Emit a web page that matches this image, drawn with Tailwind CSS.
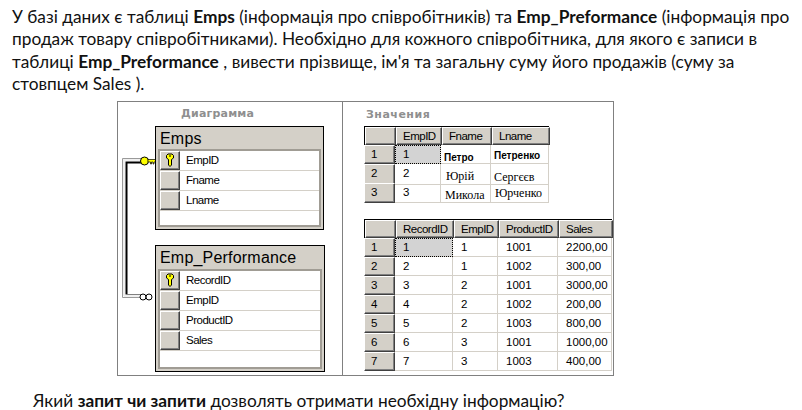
<!DOCTYPE html>
<html lang="uk">
<head>
<meta charset="UTF-8">
<title>Emps</title>
<script src="https://cdn.jsdelivr.net/npm/@tailwindcss/browser@4"></script>
</head>
<body class="bg-white w-[802px] h-[410px] overflow-hidden font-['Lato','Open_Sans',sans-serif] text-[#111]">
  <p class="pl-3 pt-[6px] text-[17.3px] leading-[22.4px] whitespace-nowrap">
    У базі даних є таблиці <b>Emps</b> (інформація про співробітників) та <b>Emp_Preformance</b> (інформація про<br>
    продаж товару співробітниками). Необхідно для кожного співробітника, для якого є записи в<br>
    таблиці <b>Emp_Preformance</b> , вивести прізвище, ім'я та загальну суму його продажів (суму за<br>
    стовпцем Sales ).
  </p>

  <div class="ml-[117px] mt-[5px] w-[497px] h-[275px] border border-[#808080] flex font-['Liberation_Sans',sans-serif] text-black">
    <!-- diagram -->
    <div class="relative w-[225px] border-r border-[#808080]">
      <div class="pt-[5px] pl-[63px] text-[11px] leading-[14px] font-bold tracking-[0.2px] text-[#8f8f8f] font-['DejaVu_Sans',sans-serif]">Диаграмма</div>

      <svg class="absolute left-[4px] top-[56px]" width="34" height="140" viewBox="0 0 34 140" fill="none">
        <path d="M.5 139.5V.5H20M.5 139.5H20" stroke="#9a9a9a"/>
        <path d="M2 138V2H20M2 138H20" stroke="#f0f0f0" stroke-width="2"/>
        <path d="M3.5 136.5H20" stroke="#808080"/>
        <path d="M20 4.5H4.5V136" stroke="#000" stroke-width="2"/>
      </svg>
      <svg class="absolute left-[22px] top-[54px]" width="16" height="10" viewBox="0 0 16 10">
        <circle cx="4.5" cy="5" r="4" fill="#ffff00" stroke="#000"/>
        <path d="M8 3.5H15.5V6H14V8H13V6H11.5V8H10.5V6H8Z" fill="#ffff00" stroke="#000" stroke-width="0.7"/>
      </svg>
      <svg class="absolute left-[21px] top-[191px]" width="15" height="8" viewBox="0 0 15 8" fill="#fff" stroke="#000">
        <circle cx="4" cy="4" r="3"/>
        <circle cx="10" cy="4" r="3"/>
      </svg>

      <div class="absolute left-[37px] top-[24px] w-[169px] h-[104px] border border-black bg-[#d4d0c8] px-[2px] pb-[2px] flex flex-col">
        <div class="h-[22px] pl-[2px] pt-[2px] text-[16px] leading-[20px] tracking-[0.2px]">Emps</div>
        <div data-fields="EmpID,Fname,Lname" class="flex-1 border-2 border-[#a09c94] bg-white"></div>
      </div>
      <div class="absolute left-[37px] top-[143px] w-[170px] h-[127px] border border-black bg-[#d4d0c8] px-[2px] pb-[2px] flex flex-col">
        <div class="h-[23px] pl-[2px] pt-[2px] text-[16px] leading-[20px] tracking-[0.2px]">Emp_Performance</div>
        <div data-fields="RecordID,EmpID,ProductID,Sales" class="flex-1 border-2 border-[#a09c94] bg-white"></div>
      </div>
    </div>

    <!-- values -->
    <div class="flex-1 pl-[21px]">
      <div class="pt-[6px] pl-[2px] h-[24px] text-[11px] leading-[14px] font-bold tracking-[0.5px] text-[#8f8f8f] font-['DejaVu_Sans',sans-serif]">Значения</div>
      <div id="t1" class="w-[185px]"></div>
      <div id="t2" class="w-[248px] mt-[17px]"></div>
    </div>
  </div>

  <p class="pl-[33px] pt-[14px] text-[17.3px] leading-[22px] whitespace-nowrap">Який <b>запит чи запити</b> дозволять отримати необхідну інформацію?</p>

  <script>
    var raised = 'border border-t-white border-l-white border-r-[#404040] border-b-[#404040] shadow-[inset_-1px_-1px_0_#808080] bg-[#d4d0c8]';
    var key = '<svg width="8" height="14" viewBox="0 0 8 14"><path d="M2 1H6L7.5 2.5V5L5.5 6.5V12L4 13.5L2.5 12V6.5L.5 5V2.5Z" fill="#ffff00" stroke="#000"/><path d="M3 2.5H5V3.5H3Z" fill="#000"/></svg>';

    document.querySelectorAll('[data-fields]').forEach(function (box) {
      box.dataset.fields.split(',').forEach(function (name, i) {
        box.insertAdjacentHTML('beforeend',
          '<div class="flex h-[20px] border-b border-[#d4d0c8]">' +
            '<div class="w-[20px] h-[19px] flex items-center justify-center ' + raised + '">' + (i == 0 ? key : '') + '</div>' +
            '<div class="pl-[6px] text-[11.5px] leading-[19px] tracking-[-0.5px]">' + name + '</div>' +
          '</div>');
      });
    });

    function grid(id, cols, head, rows) {
      var tpl = 'grid-template-columns:' + cols.map(function (c) { return c + 'px'; }).join(' ');
      var html = '<div class="grid h-[19px] border-t border-l border-black bg-[#808080]" style="' + tpl + '">' +
        '<div class="' + raised + '"></div>' +
        head.map(function (h) {
          return '<div class="pl-[6px] text-[11.5px] leading-[17px] tracking-[-0.5px] whitespace-nowrap overflow-hidden ' + raised + '">' + h + '</div>';
        }).join('') + '</div>';
      rows.forEach(function (r, n) {
        html += '<div class="grid h-[19px]" style="' + tpl + '">' +
          '<div class="pl-[6px] text-[11.5px] leading-[17px] ' + raised + '">' + (n + 1) + '</div>' +
          r.map(function (c, j) {
            var text = c.t || c;
            var cls = c.c || 'pl-[8px] text-[11.5px] leading-[18px]';
            var sel = n == 0 && j == 0 ? ' bg-[#d3d3d3] outline-1 -outline-offset-1 outline-dotted outline-black' : '';
            return '<div class="border-r border-b border-[#d4d0c8] whitespace-nowrap ' + cls + sel + '">' + text + '</div>';
          }).join('') + '</div>';
      });
      document.getElementById(id).innerHTML = html;
    }

    grid('t1', [31, 46, 50, 58], ['EmpID', 'Fname', 'Lname'], [
      ['1',
        { t: 'Петро', c: 'pl-[3px] pt-[8px] font-bold text-[10px] leading-[10px]' },
        { t: 'Петренко', c: 'pl-[3px] pt-[6px] font-bold text-[10px] leading-[10px]' }],
      ['2',
        { t: 'Юрій', c: "pl-[5px] pt-[6px] font-['Liberation_Serif',serif] text-[12px] leading-[13px]" },
        { t: 'Сергєєв', c: "pl-[3px] pt-[7px] font-['Liberation_Serif',serif] text-[12px] leading-[13px]" }],
      ['3',
        { t: 'Микола', c: "pl-[4px] pt-[6px] font-['Liberation_Serif',serif] text-[12px] leading-[13px]" },
        { t: 'Юрченко', c: "pl-[4px] pt-[4px] font-['Liberation_Serif',serif] text-[12px] leading-[13px]" }]
    ]);

    grid('t2', [31, 58, 45, 60, 54], ['RecordID', 'EmpID', 'ProductID', 'Sales'], [
      ['1', '1', '1001', '2200,00'],
      ['2', '1', '1002', '300,00'],
      ['3', '2', '1001', '3000,00'],
      ['4', '2', '1002', '200,00'],
      ['5', '2', '1003', '800,00'],
      ['6', '3', '1001', '1000,00'],
      ['7', '3', '1003', '400,00']
    ]);
  </script>
</body>
</html>
